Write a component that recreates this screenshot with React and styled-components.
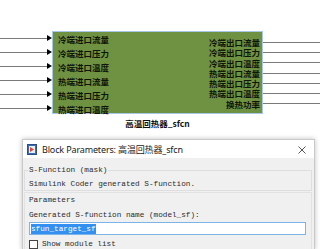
import React from "react";
import styled, { createGlobalStyle } from "styled-components";

const GlobalStyle = createGlobalStyle`
  html, body {
    margin: 0;
    padding: 0;
    background: #ffffff;
    overflow: hidden;
  }
  #root {
    width: 320px;
    height: 249px;
  }
`;

const Page = styled.div`
  width: 320px;
  height: 249px;
  display: flex;
  flex-direction: column;
  overflow: hidden;
`;

const Diagram = styled.div`
  padding-top: 31px;
  height: 139px;
  flex: none;
  box-sizing: border-box;
`;

const BlockRow = styled.div`
  display: grid;
  grid-template-columns: 52px 211px 57px;
`;

const PortColumn = styled.div`
  display: flex;
  flex-direction: column;
  padding-top: ${(p) => p.$top || 0}px;
`;

const PortRow = styled.div`
  height: ${(p) => p.$h}px;
  display: flex;
  align-items: center;
`;

const Wire = styled.div`
  flex: 1;
  height: 1px;
  background: #7a7a7a;
`;

const Arrow = styled.div`
  width: 0;
  height: 0;
  border-left: 5px solid #000;
  border-top: 3px solid transparent;
  border-bottom: 3px solid transparent;
`;

const Block = styled.div`
  height: 83px;
  box-sizing: border-box;
  border: 1px solid #a8c8ea;
  background: #6e9142;
  display: flex;
  justify-content: space-between;
  font-family: "Noto Sans CJK SC", "Noto Sans", sans-serif;
  font-size: 8.5px;
  font-weight: 600;
  color: #10150a;
`;

const LabelColumn = styled.div`
  display: flex;
  flex-direction: column;
  padding-top: ${(p) => p.$top || 0}px;
  padding-left: ${(p) => p.$left || 0}px;
  padding-right: ${(p) => p.$right || 0}px;
  text-align: ${(p) => p.$align || "left"};
`;

const PortLabel = styled.div`
  height: ${(p) => p.$h}px;
  line-height: ${(p) => p.$h}px;
  white-space: nowrap;
`;

const Caption = styled.div`
  margin-left: 52px;
  width: 211px;
  margin-top: 2px;
  text-align: center;
  font-family: "Noto Sans CJK SC", "Liberation Sans", sans-serif;
  font-weight: bold;
  font-size: 8.5px;
  color: #111;
`;

const Dialog = styled.div`
  margin-left: 22px;
  width: 293px;
  flex: 1;
  display: flex;
  flex-direction: column;
  border: 1px solid #c9c9c9;
  border-bottom: none;
  box-sizing: border-box;
  box-shadow: 0 0 5px rgba(0, 0, 0, 0.25);
  background: #f0f0f0;
`;

const TitleBar = styled.div`
  height: 18px;
  flex: none;
  background: #ffffff;
  display: flex;
  align-items: center;
  padding: 1px 8px 0 4px;
  box-sizing: border-box;
  gap: 5px;
  font-family: "Noto Sans", "Noto Sans CJK SC", sans-serif;
  font-size: 9px;
  letter-spacing: -0.15px;
  color: #1a1a1a;
`;

const Title = styled.div`
  flex: 1;
  white-space: nowrap;
`;

const Body = styled.div`
  padding: 8px 2px 0 1px;
  display: flex;
  flex-direction: column;
  gap: 1px;
  font-family: "Liberation Mono", "DejaVu Sans Mono", monospace;
  font-size: 7.7px;
  color: #2b2b2b;
`;

const Group = styled.fieldset`
  margin: 0;
  border: 1px solid #dedede;
  padding: 5px 4px 1px 4px;
  min-width: 0;
`;

const Legend = styled.legend`
  padding: 0 1px;
  margin-left: -1px;
  line-height: 9px;
`;

const Panel = styled.div`
  border: 1px solid #e2e2e2;
  padding: 3px 5px 0 4px;
  display: flex;
  flex-direction: column;
  gap: 6px;
`;

const Line = styled.div`
  white-space: nowrap;
  line-height: 9px;
`;

const Input = styled.div`
  height: 13px;
  box-sizing: border-box;
  border: 1px solid #7ab4e9;
  background: #ffffff;
  display: flex;
  align-items: center;
  padding-left: 1px;
  margin-top: -4px;
`;

const Selected = styled.span`
  background: #3390f0;
  color: #ffffff;
  line-height: 10px;
`;

const CheckRow = styled.div`
  display: flex;
  align-items: center;
  gap: 4px;
  margin-top: -1px;
`;

const Check = styled.div`
  width: 9px;
  height: 9px;
  border: 1px solid #444;
  background: #fff;
  box-sizing: border-box;
`;

const inputs = ["冷端进口流量", "冷端进口压力", "冷端进口温度", "热端进口流量", "热端进口压力", "热端进口温度"];
const outputs = ["冷端出口流量", "冷端出口压力", "冷端出口温度", "热端出口流量", "热端出口压力", "热端出口温度", "换热功率"];

const IN_H = 14;
const OUT_H = 10.3;

function BlockIcon() {
  return (
    <svg width="10" height="11" viewBox="0 0 10 11">
      <rect x="0.5" y="0.5" width="9" height="10" fill="#3b6fb6" stroke="#2d4f86" />
      <rect x="2" y="2" width="6" height="7" fill="#e9eef5" />
      <path d="M3 3 L7 5.5 L3 8 Z" fill="#e0442a" />
    </svg>
  );
}

function CloseIcon() {
  return (
    <svg width="8" height="8" viewBox="0 0 8 8">
      <path d="M0.5 0.5 L7.5 7.5 M7.5 0.5 L0.5 7.5" stroke="#444" strokeWidth="0.9" />
    </svg>
  );
}

export default function App() {
  return (
    <>
      <GlobalStyle />
      <Page>
        <Diagram>
          <BlockRow>
            <PortColumn>
              {inputs.map((n) => (
                <PortRow key={n} $h={IN_H}>
                  <Wire />
                  <Arrow />
                </PortRow>
              ))}
            </PortColumn>
            <Block>
              <LabelColumn $left={5}>
                {inputs.map((n) => (
                  <PortLabel key={n} $h={IN_H}>{n}</PortLabel>
                ))}
              </LabelColumn>
              <LabelColumn $top={5} $right={2} $align="right">
                {outputs.map((n) => (
                  <PortLabel key={n} $h={OUT_H}>{n}</PortLabel>
                ))}
              </LabelColumn>
            </Block>
            <PortColumn $top={6}>
              {outputs.map((n) => (
                <PortRow key={n} $h={OUT_H}>
                  <Wire />
                </PortRow>
              ))}
            </PortColumn>
          </BlockRow>
          <Caption>高温回热器_sfcn</Caption>
        </Diagram>
        <Dialog>
          <TitleBar>
            <BlockIcon />
            <Title>Block Parameters: 高温回热器_sfcn</Title>
            <CloseIcon />
          </TitleBar>
          <Body>
            <Group>
              <Legend>S-Function (mask)</Legend>
              <Line>Simulink Coder generated S-function.</Line>
            </Group>
            <Panel>
              <Line>Parameters</Line>
              <Line>Generated S-function name (model_sf):</Line>
              <Input>
                <Selected>sfun_target_sf</Selected>
              </Input>
              <CheckRow>
                <Check />
                <Line>Show module list</Line>
              </CheckRow>
            </Panel>
          </Body>
        </Dialog>
      </Page>
    </>
  );
}
